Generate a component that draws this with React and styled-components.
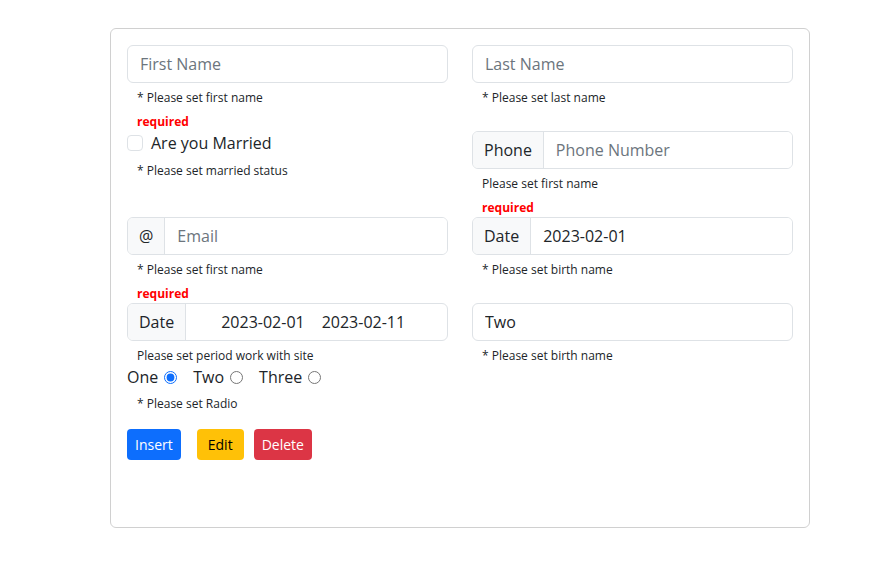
import React, { useState } from 'react';
import styled, { createGlobalStyle } from 'styled-components';

const GlobalStyle = createGlobalStyle`
  body {
    margin: 0;
    background: #fff;
    font-family: "Open Sans", "Noto Sans", sans-serif;
    color: #212529;
  }
`;

const Page = styled.div`
  padding: 28px 0 0 110px;
`;

const Card = styled.div`
  box-sizing: border-box;
  width: 700px;
  min-height: 500px;
  padding: 16px;
  border: 1px solid #d0d0d0;
  border-radius: 6px;
`;

const Grid = styled.div`
  display: grid;
  grid-template-columns: 1fr 1fr;
  grid-template-rows: repeat(3, 86px) auto;
  column-gap: 24px;
`;

const Cell = styled.div`
  display: flex;
  flex-direction: column;
  align-items: stretch;
`;

const Input = styled.input`
  box-sizing: border-box;
  width: 100%;
  height: 38px;
  flex-shrink: 0;
  padding: 6px 12px;
  font: inherit;
  font-size: 16px;
  color: #212529;
  border: 1px solid #dee2e6;
  border-radius: 6px;
  outline: none;

  &::placeholder {
    color: #6c757d;
  }
`;

const Group = styled.div`
  display: flex;
  flex-shrink: 0;
  height: 38px;
  box-sizing: border-box;
  border: 1px solid #dee2e6;
  border-radius: 6px;
  overflow: hidden;

  ${Input} {
    border: none;
    border-radius: 0;
    height: 36px;
  }
`;

const Addon = styled.span`
  display: flex;
  align-items: center;
  padding: 0 11px;
  background: #f8f9fa;
  border-right: 1px solid #dee2e6;
  font-size: 16px;
  white-space: nowrap;
`;

const Range = styled.div`
  display: flex;
  align-items: center;
  gap: 17px;
  padding-left: 35px;
  font-size: 16px;
`;

const Helper = styled.div`
  font-size: 12px;
  line-height: 18px;
  margin-top: ${(p) => p.$top ?? 6}px;
  padding-left: 10px;
`;

const Required = styled.div`
  font-size: 12px;
  font-weight: 700;
  line-height: 18px;
  margin-top: 6px;
  padding-left: 10px;
  color: #ff0000;
`;

const CheckRow = styled.label`
  display: flex;
  align-items: center;
  gap: 8px;
  height: 24px;
  font-size: 16px;
`;

const CheckBox = styled.span`
  box-sizing: border-box;
  width: 16px;
  height: 16px;
  border: 1px solid #dee2e6;
  border-radius: 4px;
`;

const RadioRow = styled.div`
  display: flex;
  align-items: center;
  height: 24px;
  font-size: 16px;
`;

const RadioLabel = styled.label`
  display: flex;
  align-items: center;
  margin-right: 16px;

  input {
    width: 13px;
    height: 13px;
    margin: 0 0 0 6px;
    accent-color: #0d6efd;
  }
`;

const Buttons = styled.div`
  display: flex;
  margin-top: 16px;
`;

const Button = styled.button`
  height: 31px;
  padding: 0 ${(p) => p.$pad ?? 8}px;
  margin-right: ${(p) => p.$space ?? 0}px;
  font: inherit;
  font-size: 14px;
  border: none;
  border-radius: 4px;
  color: ${(p) => p.$fg};
  background: ${(p) => p.$bg};
  cursor: pointer;
`;

const Field = ({ children, helper, required, top }) => (
  <Cell>
    {children}
    <Helper $top={top}>{helper}</Helper>
    {required && <Required>required</Required>}
  </Cell>
);

const App = () => {
  const [radio, setRadio] = useState('One');

  return (
    <Page>
      <GlobalStyle />
      <Card>
        <Grid>
          <Field helper="* Please set first name" required>
            <Input placeholder="First Name" />
          </Field>
          <Field helper="* Please set last name">
            <Input placeholder="Last Name" />
          </Field>

          <Field helper="* Please set married status" top={7}>
            <CheckRow>
              <CheckBox />
              Are you Married
            </CheckRow>
          </Field>
          <Field helper="Please set first name" required>
            <Group>
              <Addon>Phone</Addon>
              <Input placeholder="Phone Number" />
            </Group>
          </Field>

          <Field helper="* Please set first name" required>
            <Group>
              <Addon>@</Addon>
              <Input placeholder="Email" />
            </Group>
          </Field>
          <Field helper="* Please set birth name">
            <Group>
              <Addon>Date</Addon>
              <Input defaultValue="2023-02-01" />
            </Group>
          </Field>

          <Cell>
            <Group>
              <Addon>Date</Addon>
              <Range>
                <span>2023-02-01</span>
                <span>2023-02-11</span>
              </Range>
            </Group>
            <Helper>Please set period work with site</Helper>
            <RadioRow>
              {['One', 'Two', 'Three'].map((r) => (
                <RadioLabel key={r}>
                  {r}
                  <input
                    type="radio"
                    name="radio"
                    checked={radio === r}
                    onChange={() => setRadio(r)}
                  />
                </RadioLabel>
              ))}
            </RadioRow>
            <Helper>* Please set Radio</Helper>
            <Buttons>
              <Button $bg="#0d6efd" $fg="#fff" $space={16}>Insert</Button>
              <Button $bg="#ffc107" $fg="#000" $space={10} $pad={11}>Edit</Button>
              <Button $bg="#dc3545" $fg="#fff">Delete</Button>
            </Buttons>
          </Cell>
          <Field helper="* Please set birth name">
            <Input defaultValue="Two" />
          </Field>
        </Grid>
      </Card>
    </Page>
  );
};

export default App;
